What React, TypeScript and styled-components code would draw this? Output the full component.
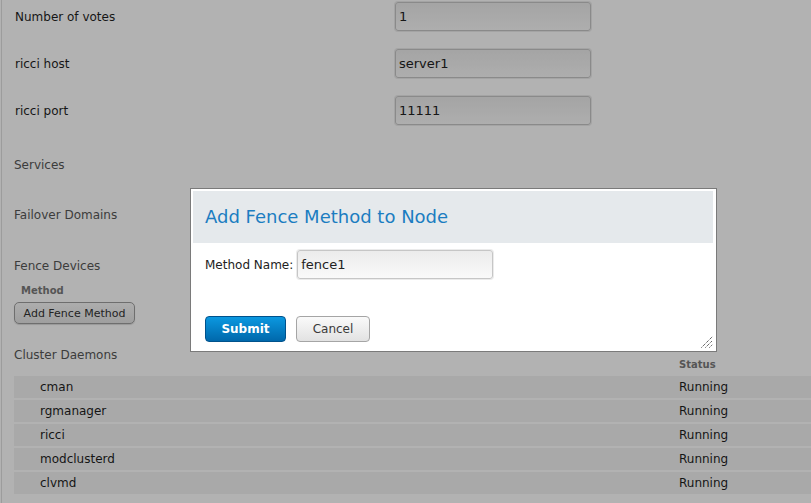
import styled, { createGlobalStyle } from 'styled-components';

const GlobalStyle = createGlobalStyle`
    html, body {
        margin: 0;
        padding: 0;
        background: #ffffff;
        font-family: "DejaVu Sans", "Noto Sans", sans-serif;
        overflow: hidden;
    }
`

const Page = styled.div`
    width: 811px;
    height: 503px;
    padding-left: 1px;
    box-sizing: border-box;
    position: relative;
    overflow: hidden;
`

const Main = styled.div`
    height: 100%;
    border-left: 1px solid #e0e0e0;
    padding-top: 2px;
    box-sizing: border-box;
`

const FormRow = styled.div`
    display: flex;
    align-items: center;
    height: 29px;
    margin-bottom: 18px;
`

const Label = styled.label`
    width: 393px;
    padding-left: 13px;
    box-sizing: border-box;
    font-size: 12px;
    color: #1f1f1f;
`

interface InputProps {
    width?: number
}

const TextInput = styled.input<InputProps>`
    width: ${props => props.width ?? 196}px;
    height: 29px;
    box-sizing: border-box;
    border: 1px solid #c6c6c6;
    border-radius: 3px;
    box-shadow: 0 0 0 1px #ebebeb;
    background: linear-gradient(#ececec, #f9f9f9);
    padding: 0 3px;
    font-family: "DejaVu Sans", sans-serif;
    font-size: 13px;
    color: #222;
    outline: none;
`

const Section = styled.div`
    padding-left: 12px;
`

interface HeadingProps {
    gap?: number
}

const Heading = styled.div<HeadingProps>`
    font-size: 12px;
    line-height: 20px;
    height: 20px;
    color: #575757;
    margin-top: ${props => props.gap ?? 0}px;
`

const SubLabel = styled.div`
    font-size: 10px;
    font-weight: bold;
    line-height: 14px;
    color: #7a7a7a;
    margin: 8px 0 4px 7px;
`

const SmallButton = styled.button`
    display: block;
    width: 121px;
    height: 22px;
    padding: 0;
    border: 1px solid #9e9e9e;
    border-radius: 5px;
    background: linear-gradient(#f8f8f8, #e4e4e4);
    box-shadow: 0 1px 1px rgba(0, 0, 0, 0.15);
    font-family: "DejaVu Sans", sans-serif;
    font-size: 11px;
    color: #333;
`

const DaemonTable = styled.div`
    margin-top: -7px;
`

const TableHead = styled.div`
    display: grid;
    grid-template-columns: 665px 1fr;
    height: 14px;
    line-height: 14px;
    margin-bottom: 4px;
    font-size: 10px;
    font-weight: bold;
    color: #7a7a7a;
`

const TableRow = styled.div`
    display: grid;
    grid-template-columns: 665px 1fr;
    align-items: center;
    height: 22px;
    margin-bottom: 2px;
    background: #f3f3f3;
    font-size: 12px;
    color: #1f1f1f;
`

const NameCell = styled.span`
    padding-left: 26px;
`

const Overlay = styled.div`
    position: absolute;
    inset: 0;
    background: rgba(0, 0, 0, 0.3);
`

const Dialog = styled.div`
    position: absolute;
    left: 190px;
    top: 188px;
    width: 527px;
    height: 164px;
    box-sizing: border-box;
    border: 1px solid #7a7a7a;
    background: #ffffff;
    padding: 2px 3px 0 2px;
`

const DialogHeader = styled.div`
    height: 52px;
    box-sizing: border-box;
    background: #e5e9ec;
    display: flex;
    align-items: center;
    padding: 0 0 2px 12px;
`

const DialogTitle = styled.h2`
    margin: 0;
    font-size: 18px;
    font-weight: normal;
    color: #1b7dc1;
`

const DialogBody = styled.div`
    padding: 7px 0 0 12px;
`

const FieldRow = styled.div`
    display: flex;
    align-items: center;
    gap: 4px;
    font-size: 12px;
    color: #222;
`

const ButtonRow = styled.div`
    display: flex;
    gap: 10px;
    margin-top: 37px;
`

interface ActionProps {
    primary?: boolean
}

const ActionButton = styled.button<ActionProps>`
    height: 26px;
    width: ${props => props.primary ? 81 : 74}px;
    padding: 0;
    border-radius: 4px;
    font-family: "DejaVu Sans", sans-serif;
    font-size: 12px;
    font-weight: ${props => props.primary ? 'bold' : 'normal'};
    color: ${props => props.primary ? '#ffffff' : '#3a3a3a'};
    border: 1px solid ${props => props.primary ? '#00528c' : '#a5a5a5'};
    background: ${props => props.primary
        ? 'linear-gradient(#0b98e0, #0068ab)'
        : 'linear-gradient(#fafafa, #e2e2e2)'};
`

const Grip = styled.svg`
    position: absolute;
    right: 3px;
    bottom: 3px;
`

const fields = [
    { label: 'Number of votes', value: '1' },
    { label: 'ricci host', value: 'server1' },
    { label: 'ricci port', value: '11111' },
]

const daemons = ['cman', 'rgmanager', 'ricci', 'modclusterd', 'clvmd']

const App = () => {
    return (
        <Page>
            <GlobalStyle />
            <Main>
                {fields.map(field => (
                    <FormRow key={field.label}>
                        <Label>{field.label}</Label>
                        <TextInput defaultValue={field.value} />
                    </FormRow>
                ))}

                <Section>
                    <Heading gap={30}>Services</Heading>
                    <Heading gap={30}>Failover Domains</Heading>
                    <Heading gap={31}>Fence Devices</Heading>
                    <SubLabel>Method</SubLabel>
                    <SmallButton>Add Fence Method</SmallButton>
                    <Heading gap={21}>Cluster Daemons</Heading>
                    <DaemonTable>
                        <TableHead>
                            <span />
                            <span>Status</span>
                        </TableHead>
                        {daemons.map(name => (
                            <TableRow key={name}>
                                <NameCell>{name}</NameCell>
                                <span>Running</span>
                            </TableRow>
                        ))}
                    </DaemonTable>
                </Section>
            </Main>

            <Overlay />

            <Dialog>
                <DialogHeader>
                    <DialogTitle>Add Fence Method to Node</DialogTitle>
                </DialogHeader>
                <DialogBody>
                    <FieldRow>
                        <span>Method Name:</span>
                        <TextInput defaultValue="fence1" />
                    </FieldRow>
                    <ButtonRow>
                        <ActionButton primary>Submit</ActionButton>
                        <ActionButton>Cancel</ActionButton>
                    </ButtonRow>
                </DialogBody>
                <Grip width="12" height="12" viewBox="0 0 12 12">
                    <g stroke="#222" strokeWidth="1" strokeDasharray="1 1">
                        <line x1="0.5" y1="11.5" x2="11.5" y2="0.5" />
                        <line x1="4.5" y1="11.5" x2="11.5" y2="4.5" />
                        <line x1="8.5" y1="11.5" x2="11.5" y2="8.5" />
                    </g>
                </Grip>
            </Dialog>
        </Page>
    )
}

export default App;
